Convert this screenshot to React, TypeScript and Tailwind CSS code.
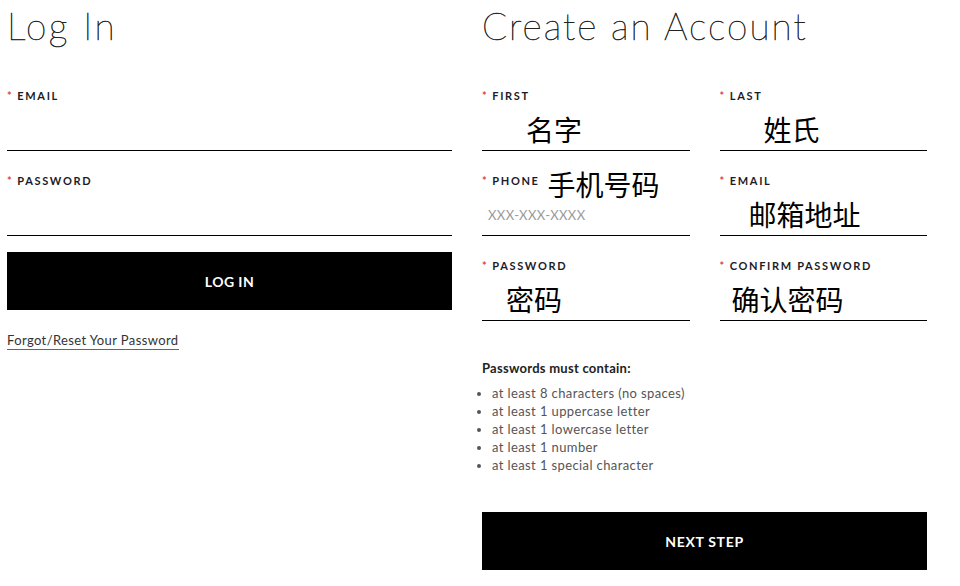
import React from "react";

const sans = "font-['Lato','Noto_Sans_CJK_SC',sans-serif]";
const cjk = "font-['Noto_Sans_CJK_SC',sans-serif] text-[28px] leading-none font-normal tracking-normal text-black";
const title = "mt-[4px] text-[37px] leading-[44px] font-thin text-[#222] [-webkit-text-stroke:0.6px_#222]";

function Label({ text, children }: { text: string; children?: React.ReactNode }) {
  return (
    <div className="flex items-center h-[12px] text-[11px] leading-[12px] font-bold tracking-[0.15em] text-[#1c1c28]">
      <span className="text-[#e0453a] mr-[4px]">*</span>
      <span>{text}</span>
      {children}
    </div>
  );
}

function Field({
  label,
  value,
  pad = "pl-0",
  extra,
  placeholder,
}: {
  label: string;
  value?: string;
  pad?: string;
  extra?: string;
  placeholder?: string;
}) {
  return (
    <div className="h-[61px] flex flex-col border-b border-black">
      <Label text={label}>
        {extra && <span className={`${cjk} ml-[8px] mt-[6px]`}>{extra}</span>}
      </Label>
      <div className={`flex-1 flex items-center ${pad}`}>
        {value && <span className={`${cjk} mt-[5px]`}>{value}</span>}
        {placeholder && (
          <span className="text-[13px] text-[#9a9a9a] tracking-[0.03em] mt-[10px]">{placeholder}</span>
        )}
      </div>
    </div>
  );
}

export default function App() {
  return (
    <div className={`${sans} bg-white min-h-[586px] flex gap-[30px] pl-[7px]`}>
      {/* Log In */}
      <div className="w-[445px] flex flex-col">
        <h1 className={`${title} tracking-[0.07em]`}>Log In</h1>
        <div className="mt-[42px] flex flex-col gap-[24px]">
          <Field label="EMAIL" />
          <Field label="PASSWORD" />
        </div>
        <button className="mt-[16px] h-[58px] bg-black text-white text-[14px] font-bold tracking-[0.03em]">
          LOG IN
        </button>
        <div className="mt-[22px] text-[13px] leading-[16px]">
          <a className="text-[#333] tracking-[0.03em] border-b border-[#666] pb-[1px]">
            Forgot/Reset Your Password
          </a>
        </div>
      </div>

      {/* Create an Account */}
      <div className="w-[445px] flex flex-col">
        <h1 className={`${title} tracking-[0.055em]`}>Create an Account</h1>
        <div className="mt-[42px] grid grid-cols-2 gap-x-[30px] gap-y-[24px]">
          <Field label="FIRST" value="名字" pad="pl-[44px]" />
          <Field label="LAST" value="姓氏" pad="pl-[44px]" />
          <Field label="PHONE" extra="手机号码" placeholder="XXX-XXX-XXXX" pad="pl-[6px]" />
          <Field label="EMAIL" value="邮箱地址" pad="pl-[29px]" />
          <Field label="PASSWORD" value="密码" pad="pl-[24px]" />
          <Field label="CONFIRM PASSWORD" value="确认密码" pad="pl-[12px]" />
        </div>
        <p className="mt-[39px] text-[13px] leading-[16px] font-bold text-[#222] tracking-[0.02em]">
          Passwords must contain:
        </p>
        <ul className="mt-[8px] list-disc pl-[10px] text-[13px] leading-[18px] text-[#555] tracking-[0.03em]">
          <li>at least 8 characters (no spaces)</li>
          <li>at least 1 uppercase letter</li>
          <li>at least 1 lowercase letter</li>
          <li>at least 1 number</li>
          <li>at least 1 special character</li>
        </ul>
        <button className="mt-[38px] h-[58px] bg-black text-white text-[14px] font-bold tracking-[0.05em]">
          NEXT STEP
        </button>
      </div>
    </div>
  );
}
